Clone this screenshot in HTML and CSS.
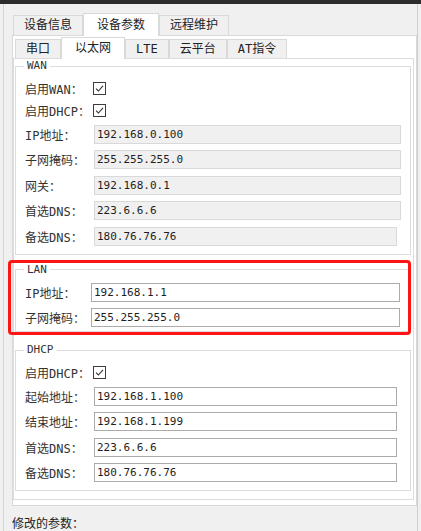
FILE: index.html
```html
<!DOCTYPE html>
<html lang="zh-CN">
<head>
  <meta charset="UTF-8" />
  <meta name="viewport" content="width=device-width, initial-scale=1.0" />
  <title>设备参数</title>
  <link rel="stylesheet" href="styles.css">
</head>
<body>
  <div class="topbar"></div>

  <div class="window">
    <div class="tabs tabs-main">
      <div class="tab">设备信息</div>
      <div class="tab active">设备参数</div>
      <div class="tab">远程维护</div>
    </div>

    <div class="panel panel-main">
      <div class="tabs tabs-sub">
        <div class="tab">串口</div>
        <div class="tab active">以太网</div>
        <div class="tab">LTE</div>
        <div class="tab">云平台</div>
        <div class="tab">AT指令</div>
      </div>

      <div class="panel panel-sub">
        <fieldset class="group group-wan">
          <legend>WAN</legend>
          <div class="row check-row">
            <label>启用WAN：</label>
            <span class="check"><svg width="13" height="13" viewBox="0 0 13 13"><rect x="0.5" y="0.5" width="12" height="12" fill="#fff" stroke="#3c3c3c"/><polyline points="3,6.6 5.4,9 10,3.8" fill="none" stroke="#333" stroke-width="1.1"/></svg></span>
          </div>
          <div class="row check-row">
            <label>启用DHCP：</label>
            <span class="check"><svg width="13" height="13" viewBox="0 0 13 13"><rect x="0.5" y="0.5" width="12" height="12" fill="#fff" stroke="#3c3c3c"/><polyline points="3,6.6 5.4,9 10,3.8" fill="none" stroke="#333" stroke-width="1.1"/></svg></span>
          </div>
          <div class="row">
            <label>IP地址：</label>
            <input class="field field-off" value="192.168.0.100" readonly>
          </div>
          <div class="row">
            <label>子网掩码：</label>
            <input class="field field-off" value="255.255.255.0" readonly>
          </div>
          <div class="row">
            <label>网关：</label>
            <input class="field field-off" value="192.168.0.1" readonly>
          </div>
          <div class="row">
            <label>首选DNS：</label>
            <input class="field field-off" value="223.6.6.6" readonly>
          </div>
          <div class="row">
            <label>备选DNS：</label>
            <input class="field field-off field-short" value="180.76.76.76" readonly>
          </div>
        </fieldset>

        <div class="marked">
          <fieldset class="group group-lan">
            <legend>LAN</legend>
            <div class="row">
              <label>IP地址：</label>
              <input class="field" value="192.168.1.1">
            </div>
            <div class="row">
              <label>子网掩码：</label>
              <input class="field" value="255.255.255.0">
            </div>
          </fieldset>
        </div>

        <fieldset class="group group-dhcp">
          <legend>DHCP</legend>
          <div class="row check-row">
            <label>启用DHCP：</label>
            <span class="check"><svg width="13" height="13" viewBox="0 0 13 13"><rect x="0.5" y="0.5" width="12" height="12" fill="#fff" stroke="#3c3c3c"/><polyline points="3,6.6 5.4,9 10,3.8" fill="none" stroke="#333" stroke-width="1.1"/></svg></span>
          </div>
          <div class="row">
            <label>起始地址：</label>
            <input class="field" value="192.168.1.100">
          </div>
          <div class="row">
            <label>结束地址：</label>
            <input class="field" value="192.168.1.199">
          </div>
          <div class="row">
            <label>首选DNS：</label>
            <input class="field" value="223.6.6.6">
          </div>
          <div class="row">
            <label>备选DNS：</label>
            <input class="field" value="180.76.76.76">
          </div>
        </fieldset>
      </div>
    </div>

    <div class="changes">修改的参数：</div>
  </div>
</body>
</html>
```

FILE: styles.css
```css
* {
  box-sizing: border-box;
}

body {
  margin: 0;
  height: 531px;
  overflow: hidden;
  background: #f0f0f0;
  font-family: "DejaVu Sans Mono", "Noto Sans CJK SC", monospace;
  font-size: 12px;
  color: #222;
}

.topbar {
  height: 4px;
  background: #2c2c2c;
}

.window {
  margin: 0 3px;
  padding: 9px 0 0 8px;
  height: 527px;
  border-left: 1px solid #d4d4d4;
  border-right: 1px solid #cfcfcf;
}

/* tabs */
.tabs {
  display: flex;
  align-items: flex-end;
}

.tabs-main {
  margin-left: 1px;
}

.tabs-sub {
  margin-left: 2px;
}

.tab {
  height: 20px;
  padding: 0 10px;
  border: 1px solid #d9d9d9;
  border-bottom: none;
  background: #f0f0f0;
  line-height: 19px;
  white-space: nowrap;
}

.tab.active {
  position: relative;
  height: 23px;
  margin-bottom: -1px;
  padding: 0 13px;
  background: #fff;
  line-height: 22px;
}

.tabs-sub .tab {
  height: 19px;
  line-height: 18px;
}

.tabs-sub .tab.active {
  height: 22px;
  line-height: 21px;
}

/* panels */
.panel {
  background: #fff;
  border: 1px solid #d9d9d9;
}

.panel-main {
  padding-top: 1px;
}

.panel-sub {
  margin: 0 2px 5px 0;
  padding: 0 2px 8px 1px;
  border-color: #dcdcdc;
}

/* group boxes */
.group {
  margin: 0;
  min-inline-size: 0;
  padding: 6px 9px 8px 9px;
  border: 1px solid #dcdcdc;
}

.group legend {
  margin-left: -1px;
  padding: 0 3px;
  font-size: 11px;
  line-height: 14px;
  color: #333;
}

.group-lan {
  padding: 6px 10px 4px 9px;
}

.group-dhcp {
  margin-top: 11px;
  padding-right: 13px;
}

.marked {
  position: relative;
  margin-top: 8px;
}

.marked::after {
  content: "";
  position: absolute;
  top: -2.5px;
  left: -7px;
  right: 0;
  bottom: -2.5px;
  border: 3px solid #ff1414;
  border-radius: 4px;
  pointer-events: none;
}

/* rows */
.row {
  display: flex;
  align-items: center;
  height: 19px;
}

.row + .row {
  margin-top: 6.5px;
}

.check-row + .row {
  margin-top: 4.5px;
}

.check-row + .check-row {
  margin-top: 3px;
}

.row label {
  flex: none;
  width: 69px;
  font-size: 12px;
  color: #333;
  white-space: nowrap;
}

.group-lan .row label {
  width: 66px;
}

.check {
  display: block;
  width: 13px;
  height: 13px;
  margin-left: -1px;
}

.check svg {
  display: block;
}

.field {
  flex: 1;
  min-width: 0;
  height: 19px;
  margin: 0;
  padding: 0 2px;
  border: 1px solid #ababab;
  border-radius: 0;
  background: #fff;
  font-family: "DejaVu Sans Mono", monospace;
  font-size: 11px;
  color: #1e1e1e;
  outline: none;
}

.field-off {
  background: #f0f0f0;
  border-color: #d9d9d9;
}

.field-short {
  margin-right: 4px;
}

.changes {
  margin-top: 10px;
  line-height: 16px;
  color: #222;
}
```
